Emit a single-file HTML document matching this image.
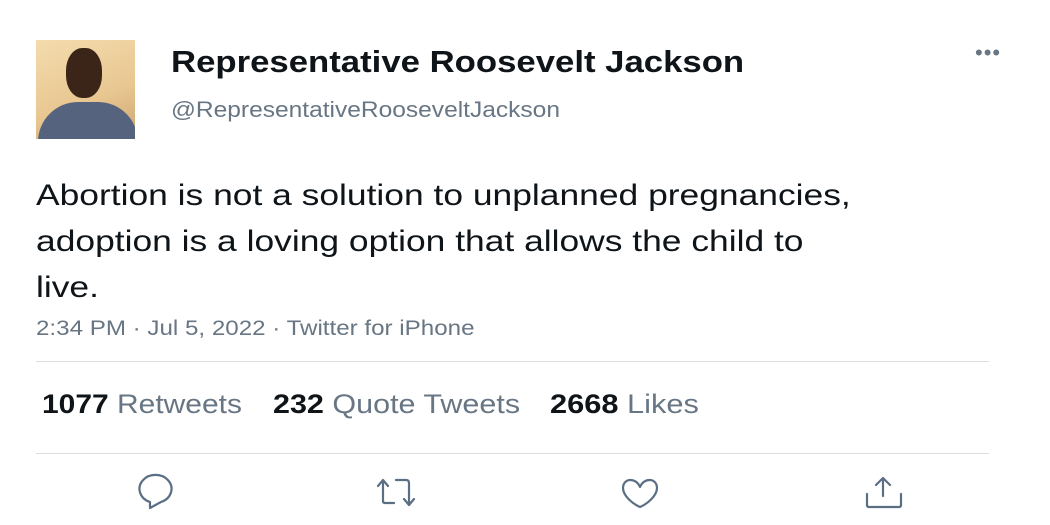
<!DOCTYPE html>
<html><head><style>
body{margin:0;width:1050px;height:525px;background:#fff;font-family:"Liberation Sans",Arial,sans-serif;position:relative;overflow:hidden}
.a{position:absolute;white-space:nowrap;transform-origin:0 0}
</style></head><body>
<div class="a" style="left:36px;top:40px;width:99px;height:99px;overflow:hidden;background:linear-gradient(160deg,#f4dcae,#e8c690 60%,#caa473)">
<div style="position:absolute;left:2px;top:62px;width:100px;height:50px;border-radius:40px 40px 0 0;background:#56637e"></div>
<div style="position:absolute;left:30px;top:8px;width:36px;height:50px;border-radius:45%;background:#3a2518"></div>
</div>
<div class="a" style="left:171px;top:44px;font-size:31px;font-weight:bold;color:#0f1419;transform:scaleX(1.12)">Representative Roosevelt Jackson</div>
<div class="a" style="left:171px;top:97px;font-size:22px;color:#687684;transform:scaleX(1.115)">@RepresentativeRooseveltJackson</div>
<div class="a" style="left:975px;top:40px;font-size:22px;color:#687684;letter-spacing:1px">•••</div>
<div class="a" style="left:36px;top:173px;font-size:30px;line-height:46px;color:#0f1419;transform:scaleX(1.18)">Abortion is not a solution to unplanned pregnancies,<br>adoption is a loving option that allows the child to<br>live.</div>
<div class="a" style="left:36px;top:317px;font-size:21px;color:#687684;transform:scaleX(1.15)">2:34 PM · Jul 5, 2022 · Twitter for iPhone</div>
<div class="a" style="left:36px;top:361px;width:953px;height:1px;background:#d9dee2"></div>
<div class="a" style="left:42px;top:389px;font-size:27px;color:#687684;transform:scaleX(1.11)"><b style="color:#0f1419">1077</b> Retweets</div>
<div class="a" style="left:273px;top:389px;font-size:27px;color:#687684;transform:scaleX(1.13)"><b style="color:#0f1419">232</b> Quote Tweets</div>
<div class="a" style="left:550px;top:389px;font-size:27px;color:#687684;transform:scaleX(1.14)"><b style="color:#0f1419">2668</b> Likes</div>
<div class="a" style="left:36px;top:453px;width:953px;height:1px;background:#d9dee2"></div>
<svg class="a" style="left:0;top:0" width="1050" height="525" fill="none" stroke="#5b6f84" stroke-width="2.2" stroke-linecap="round" stroke-linejoin="round">
<path d="M150 502 A16 14 0 1 1 161 502 L150 508 Z"/>
<path d="M378 486 L383 480 L388 486 M383 480 V501 Q383 503 385 503 H394 M396 480 H406 Q409 480 409 483 V504 M404 499 L409 505 L414 499"/>
<path d="M640 487 C636 477 623 478 623 488 C623 496 633 504 640 507 C647 504 657 496 657 488 C657 478 644 477 640 487 Z"/>
<path d="M883 478 L883 496 M876 485 L883 478 L890 485 M867 494 V505 Q867 507 869 507 H899 Q901 507 901 505 V494"/>
</svg>
</body></html>
